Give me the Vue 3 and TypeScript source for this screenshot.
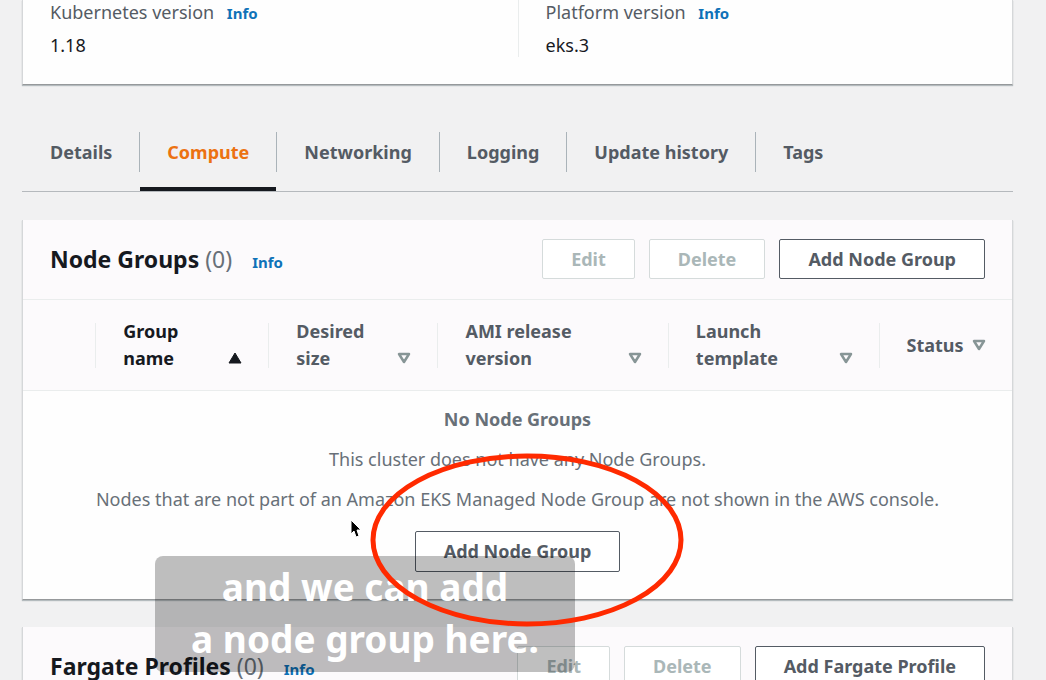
<script setup lang="ts">
import { ref } from 'vue'

interface Column {
  lines: string[]
  width: string
  sorted?: boolean
}

const versions = [
  { label: 'Kubernetes version', value: '1.18' },
  { label: 'Platform version', value: 'eks.3' },
]

const tabs = ['Details', 'Compute', 'Networking', 'Logging', 'Update history', 'Tags']
const activeTab = ref('Compute')

const columns: Column[] = [
  { lines: ['Group', 'name'], width: '17.5%', sorted: true },
  { lines: ['Desired', 'size'], width: '17.1%' },
  { lines: ['AMI release', 'version'], width: '23.3%' },
  { lines: ['Launch', 'template'], width: '21.3%' },
  { lines: ['Status'], width: '13.5%' },
]
</script>

<template>
  <div class="page">
    <section class="card versions">
      <dl v-for="item in versions" :key="item.label" class="version">
        <dt>{{ item.label }} <a href="#" class="info">Info</a></dt>
        <dd>{{ item.value }}</dd>
      </dl>
    </section>

    <nav class="tabs">
      <div v-for="tab in tabs" :key="tab" class="tab-item">
        <button
          type="button"
          class="tab"
          :class="{ active: tab === activeTab }"
          @click="activeTab = tab"
        >{{ tab }}</button>
      </div>
    </nav>

    <section class="card groups">
      <header class="card-header">
        <h2>Node Groups <span class="count">(0)</span></h2>
        <a href="#" class="info">Info</a>
        <div class="actions">
          <button type="button" class="btn" disabled>Edit</button>
          <button type="button" class="btn" disabled>Delete</button>
          <button type="button" class="btn">Add Node Group</button>
        </div>
      </header>
      <table>
        <colgroup>
          <col />
          <col v-for="col in columns" :key="col.lines[0]" :style="{ width: col.width }" />
        </colgroup>
        <thead>
          <tr>
            <td></td>
            <th v-for="col in columns" :key="col.lines[0]" scope="col">
              <button type="button" class="sort" :class="{ sorted: col.sorted }">
                <span class="sort-content">
                  <span>
                    <span v-for="line in col.lines" :key="line" class="line">{{ line }}</span>
                  </span>
                  <svg viewBox="0 0 14 27" width="14" height="27" aria-hidden="true">
                    <path v-if="col.sorted" d="M7 8 L13 18 H1 Z" fill="currentColor" stroke="currentColor" stroke-linejoin="round" />
                    <path v-else d="M2 9 H12 L7 17 Z" fill="none" stroke="#879596" stroke-width="2.5" stroke-linejoin="round" />
                  </svg>
                </span>
              </button>
            </th>
          </tr>
        </thead>
        <tbody>
          <tr>
            <td colspan="6" class="empty">
              <p><strong>No Node Groups</strong></p>
              <p>This cluster does not have any Node Groups.</p>
              <p>Nodes that are not part of an Amazon EKS Managed Node Group are not shown in the AWS console.</p>
              <button type="button" class="btn">Add Node Group</button>
            </td>
          </tr>
        </tbody>
      </table>
    </section>

    <section class="card fargate">
      <header class="card-header">
        <h2>Fargate Profiles <span class="count">(0)</span></h2>
        <a href="#" class="info">Info</a>
        <div class="actions">
          <button type="button" class="btn" disabled>Edit</button>
          <button type="button" class="btn" disabled>Delete</button>
          <button type="button" class="btn">Add Fargate Profile</button>
        </div>
      </header>
    </section>

    <div class="caption">and we can add<br />a node group here.</div>

    <svg class="highlight" viewBox="0 0 316 174" width="316" height="174" aria-hidden="true">
      <ellipse cx="158" cy="87" rx="154" ry="84" fill="none" stroke="#ff2a00" stroke-width="5" />
    </svg>

    <svg class="pointer" viewBox="0 0 12 20" width="12" height="20" aria-hidden="true">
      <path d="M1 1 V15 L4 12 L6 18 L9 17 L7 11 H11 Z" fill="#000" stroke="#fff" stroke-width="1" />
    </svg>
  </div>
</template>

<style>
body {
  margin: 0;
  background: #f1f1f2;
}
</style>

<style scoped>
.page {
  position: relative;
  box-sizing: border-box;
  height: 100vh;
  overflow: hidden;
  padding: 0 33px 0 22px;
  background: #f1f1f2;
  color: #16191f;
  font-family: 'Noto Sans', 'Open Sans', sans-serif;
  font-size: 18px;
  line-height: 27px;
}

button {
  font: inherit;
  cursor: pointer;
}

.card {
  background: #fefefe;
  border: 1px solid #d5d7d9;
  border-top: 0;
  border-bottom: 1px solid #96999b;
  box-shadow: 0 1px 1px rgba(0, 28, 36, 0.25);
}

.info {
  color: #0f72b8;
  font-size: 15px;
  font-weight: 700;
  line-height: 20px;
  text-decoration: none;
}

.versions {
  display: grid;
  grid-template-columns: 1fr 1fr;
  padding-bottom: 27px;
}

.version {
  margin: 0;
  padding-left: 27px;
  line-height: 24px;
}

.version + .version {
  border-left: 1px solid #eaeded;
}

.version dt {
  height: 24px;
  color: #545b64;
}

.version .info {
  margin-left: 8px;
}

.version dd {
  margin: 9px 0 0;
}

.tabs {
  display: flex;
  margin-top: 47px;
  padding-left: 1px;
  border-bottom: 1px solid #b5b9bd;
}

.tab-item {
  display: flex;
  align-items: flex-start;
}

.tab-item:not(:last-child)::after {
  content: '';
  width: 1px;
  height: 40px;
  background: #aab3b9;
}

.tab {
  height: 59px;
  padding: 0 27px 15px;
  border: 0;
  border-bottom: 4px solid transparent;
  background: none;
  color: #545b64;
  font-weight: 700;
}

.tab.active {
  border-bottom-color: #16191f;
  color: #ec7211;
}

.groups {
  margin-top: 28px;
}

.fargate {
  margin-top: 27px;
}

.card-header {
  display: flex;
  align-items: center;
  padding: 19px 27px 20px;
  border-bottom: 1px solid #eaeded;
  background: #fcfafc;
}

h2 {
  margin: 0 20px 0 0;
  font-size: 23px;
  font-weight: 700;
  line-height: 32px;
}

.count {
  color: #687078;
  font-weight: 400;
}

.card-header .info {
  padding-top: 6px;
}

.actions {
  display: flex;
  gap: 14px;
  margin-left: auto;
}

.btn {
  height: 40px;
  padding: 0 28px;
  border: 1px solid #545b64;
  border-radius: 2px;
  background: #fff;
  color: #545b64;
  font-weight: 700;
}

.btn:disabled {
  border-color: #d5dbdb;
  color: #aab7b8;
  cursor: default;
}

table {
  width: 100%;
  table-layout: fixed;
  border-collapse: collapse;
}

thead {
  background: #fcfafc;
  border-bottom: 1px solid #eaeded;
}

thead th,
thead td {
  padding: 18px 0;
}

.sort {
  display: flex;
  align-items: center;
  gap: 27px;
  width: 100%;
  padding: 0 26px 0 0;
  border: 0;
  background: none;
  color: #545b64;
  font-weight: 700;
  text-align: left;
}

.sort::before {
  content: '';
  width: 1px;
  height: 45px;
  background: #eaeded;
}

.sort-content {
  display: flex;
  flex: 1;
  align-items: flex-end;
  justify-content: space-between;
}

.sorted {
  color: #16191f;
}

.line {
  display: block;
}

.empty {
  padding: 15px 20px 27px;
  color: #687078;
  text-align: center;
}

.empty p {
  margin: 0 0 13px;
}

.empty .btn {
  height: 41px;
  margin-top: 5px;
}

.caption {
  position: absolute;
  left: 155px;
  top: 556px;
  box-sizing: border-box;
  width: 420px;
  padding: 5px 0 7px;
  border-radius: 8px;
  background: rgba(0, 0, 0, 0.25);
  color: #fff;
  font-family: 'Noto Sans', sans-serif;
  font-size: 37px;
  font-weight: 700;
  line-height: 52px;
  text-align: center;
}

.highlight {
  position: absolute;
  left: 369px;
  top: 453px;
}

.pointer {
  position: absolute;
  left: 350px;
  top: 519px;
}
</style>
